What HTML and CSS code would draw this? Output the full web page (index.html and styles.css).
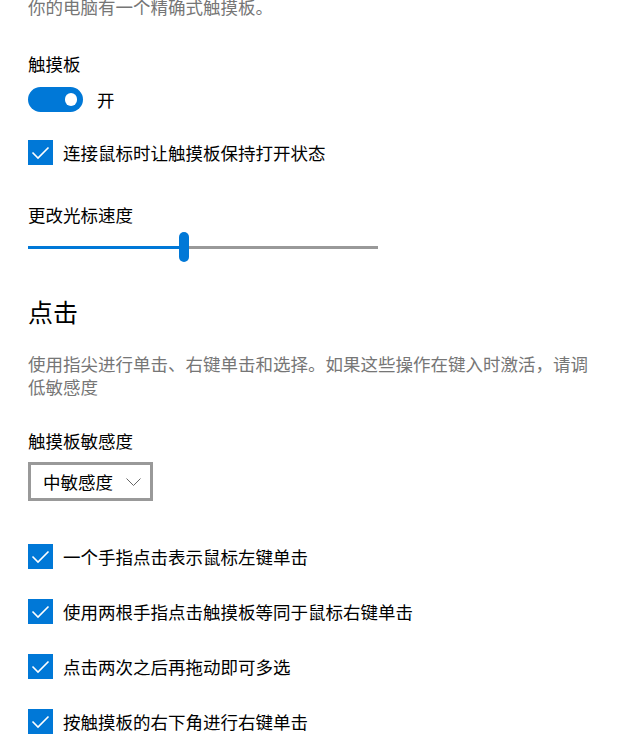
FILE: index.html
```html
<!DOCTYPE html>
<html>
	<head>
		<title>触摸板</title>
		<meta http-equiv="Content-Type" content="text/html; charset=UTF-8">
		<link rel="stylesheet" href="styles.css">
	</head>

	<body>
		<div class="container">
			<p class="intro">你的电脑有一个精确式触摸板。</p>

			<div class="label label-first">触摸板</div>
			<div class="toggle-row">
				<div class="toggle"><span class="knob"></span></div>
				<span class="toggle-text">开</span>
			</div>

			<div class="check-row check-keep">
				<span class="box"><svg width="25" height="25" viewBox="0 0 25 25"><polyline points="4.5,12.5 10,18 20.5,7.5" /></svg></span>
				<span>连接鼠标时让触摸板保持打开状态</span>
			</div>

			<div class="label label-speed">更改光标速度</div>
			<div class="slider">
				<span class="fill"></span>
				<span class="thumb"></span>
				<span class="rest"></span>
			</div>

			<h2 class="heading">点击</h2>
			<p class="desc">使用指尖进行单击、右键单击和选择。如果这些操作在键入时激活，请调低敏感度</p>

			<div class="label label-sens">触摸板敏感度</div>
			<div class="combo">
				<span>中敏感度</span>
				<svg class="chevron" width="15" height="8" viewBox="0 0 15 8"><polyline points="0.5,0.5 7.5,7.5 14.5,0.5" /></svg>
			</div>

			<div class="checks">
				<div class="check-row">
					<span class="box"><svg width="25" height="25" viewBox="0 0 25 25"><polyline points="4.5,12.5 10,18 20.5,7.5" /></svg></span>
					<span>一个手指点击表示鼠标左键单击</span>
				</div>
				<div class="check-row">
					<span class="box"><svg width="25" height="25" viewBox="0 0 25 25"><polyline points="4.5,12.5 10,18 20.5,7.5" /></svg></span>
					<span>使用两根手指点击触摸板等同于鼠标右键单击</span>
				</div>
				<div class="check-row">
					<span class="box"><svg width="25" height="25" viewBox="0 0 25 25"><polyline points="4.5,12.5 10,18 20.5,7.5" /></svg></span>
					<span>点击两次之后再拖动即可多选</span>
				</div>
				<div class="check-row">
					<span class="box"><svg width="25" height="25" viewBox="0 0 25 25"><polyline points="4.5,12.5 10,18 20.5,7.5" /></svg></span>
					<span>按触摸板的右下角进行右键单击</span>
				</div>
			</div>
		</div>
	</body>
</html>
```

FILE: styles.css
```css
body {
	margin: 0;
	background-color: #fff;
	color: #000;
	font-family: "Noto Sans CJK SC", "Noto Sans", sans-serif;
	font-size: 17.5px;
	line-height: 25px;
}

.container {
	padding: 0 46px 0 28px;
	max-width: 570px;
}

.intro {
	margin: -6px 0 0 0;
	color: #767676;
}

.label {
	height: 25px;
}
.label-first {
	margin-top: 32px;
}
.label-speed {
	margin-top: 37px;
}
.label-sens {
	margin-top: 30px;
}

/* toggle switch */
.toggle-row {
	display: flex;
	align-items: center;
	margin-top: 11px;
	height: 25px;
}
.toggle {
	display: flex;
	align-items: center;
	justify-content: flex-end;
	box-sizing: border-box;
	width: 55px;
	height: 25px;
	padding-right: 6px;
	border-radius: 12.5px;
	background-color: #0078d7;
}
.knob {
	width: 12.5px;
	height: 12.5px;
	border-radius: 50%;
	background-color: #fff;
}
.toggle-text {
	margin-left: 14px;
}

/* checkboxes */
.check-row {
	display: flex;
	align-items: center;
	height: 25px;
}
.check-keep {
	margin-top: 28px;
}
.box {
	display: block;
	width: 25px;
	height: 25px;
	margin-right: 10px;
	background-color: #0078d7;
}
.box svg {
	display: block;
}
.box polyline {
	fill: none;
	stroke: #fff;
	stroke-width: 1.6;
}

.checks {
	display: flex;
	flex-direction: column;
	gap: 30px;
	margin-top: 43px;
}

/* slider */
.slider {
	display: flex;
	align-items: center;
	width: 350px;
	height: 30px;
	margin-top: 5px;
}
.fill {
	width: 151px;
	height: 3px;
	background-color: #0078d7;
}
.thumb {
	width: 10px;
	height: 30px;
	border-radius: 5px;
	background-color: #0078d7;
}
.rest {
	flex: 1;
	height: 3px;
	background-color: #999;
}

.heading {
	margin: 32px 0 0 0;
	font-size: 25px;
	font-weight: normal;
	line-height: 35px;
}

.desc {
	margin: 22.5px 0 0 0;
	color: #767676;
	line-height: 23px;
}

/* combo box */
.combo {
	display: flex;
	align-items: center;
	box-sizing: border-box;
	width: 125px;
	height: 39px;
	margin-top: 9.5px;
	padding-left: 12px;
	border: 3px solid #999;
}
.chevron {
	margin-left: 13px;
}
.chevron polyline {
	fill: none;
	stroke: #666;
	stroke-width: 1;
}
```
